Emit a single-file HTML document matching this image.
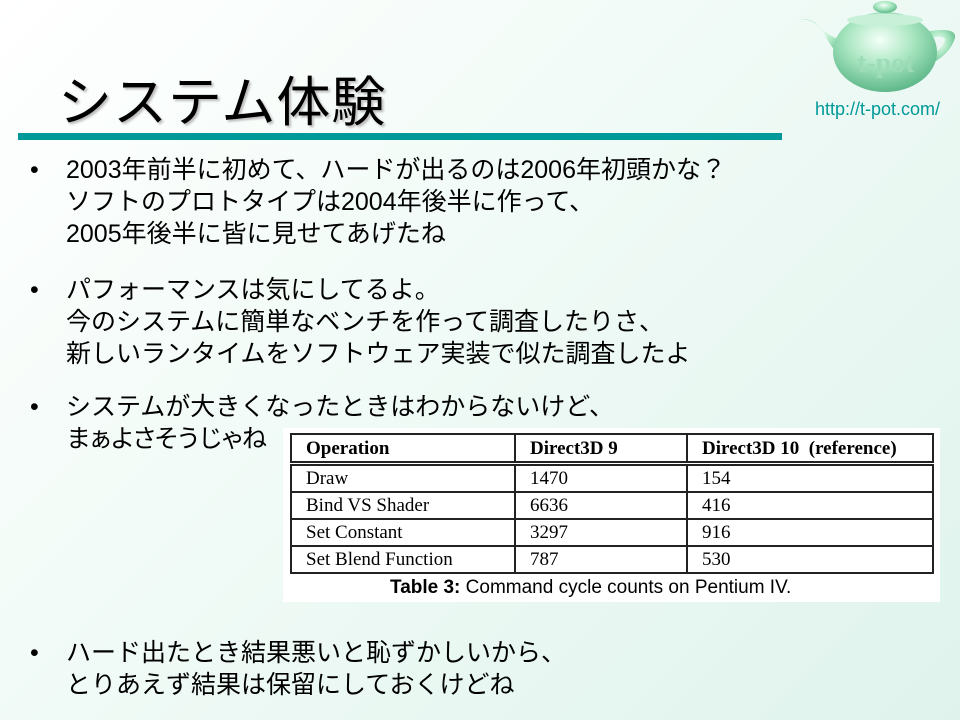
<!DOCTYPE html>
<html><head><meta charset="utf-8"><style>
body{margin:0;width:960px;height:720px;overflow:hidden;background:linear-gradient(135deg,#ffffff 0%,#f2fbf7 40%,#dff3ec 100%);font-family:"Liberation Sans","Noto Sans CJK JP",sans-serif;position:relative}
.t{position:absolute;left:58px;top:58px;font-size:54px;color:#000;text-shadow:2px 2px 2px #bbb;letter-spacing:1px}
.bar{position:absolute;left:18px;top:133px;width:764px;height:7px;background:#00999a}
.url{position:absolute;left:815px;top:99px;font-size:18px;color:#009999}
.b{position:absolute;left:30px;font-size:25px;line-height:32px;color:#000;letter-spacing:0}
.b span{position:absolute;left:0}
.b div{margin-left:36px;white-space:nowrap}
.box{position:absolute;left:283px;top:428px;width:657px;height:174px;background:#fff}
table{position:absolute;left:290px;top:433px;border-collapse:collapse;font-family:"Liberation Serif",serif;font-size:19px}
td{border:2px solid #222;padding:0 0 0 14px;height:25px;line-height:25px}
tr.h td{font-weight:bold;height:26px;border-bottom:5px double #222}
.cap{position:absolute;left:390px;top:577px;font-size:19px}
</style></head><body>
<svg style="position:absolute;left:785px;top:0" width="175" height="100" viewBox="0 0 175 100">
<defs><radialGradient id="g" cx="45%" cy="35%" r="65%"><stop offset="0" stop-color="#f4fff8"/><stop offset=".5" stop-color="#a8e6c0"/><stop offset="1" stop-color="#5fb88a"/></radialGradient></defs>
<path d="M10 20 Q30 16 40 35 Q48 52 60 58 L62 42 Q44 38 32 24 Q24 17 10 20Z" fill="url(#g)"/>
<path d="M140 32 Q172 26 170 38 Q165 55 142 66 L140 58 Q160 48 160 39 Q154 33 140 42Z" fill="url(#g)"/>
<ellipse cx="100" cy="52" rx="52" ry="40" fill="url(#g)"/>
<ellipse cx="100" cy="20" rx="38" ry="6" fill="#c8f0d8"/>
<ellipse cx="100" cy="7" rx="12" ry="6" fill="url(#g)"/>
<text x="72" y="72" font-family="Liberation Serif" font-weight="bold" font-size="28" fill="#9edbb8">t-pot</text>
</svg>
<div class="url">http://t-pot.com/</div>
<div class="t">システム体験</div>
<div class="bar"></div>
<div class="b" style="top:154px"><span>•</span><div>2003年前半に初めて、ハードが出るのは2006年初頭かな？<br>ソフトのプロトタイプは2004年後半に作って、<br>2005年後半に皆に見せてあげたね</div></div>
<div class="b" style="top:274px"><span>•</span><div>パフォーマンスは気にしてるよ。<br>今のシステムに簡単なベンチを作って調査したりさ、<br>新しいランタイムをソフトウェア実装で似た調査したよ</div></div>
<div class="b" style="top:391px"><span>•</span><div>システムが大きくなったときはわからないけど、<br><span style="position:static;letter-spacing:-3px">まぁよさそうじゃね</span></div></div>
<div class="b" style="top:637px"><span>•</span><div>ハード出たとき結果悪いと恥ずかしいから、<br>とりあえず結果は保留にしておくけどね</div></div>
<div class="box"></div>
<table>
<tr class="h"><td style="width:208px">Operation</td><td style="width:156px">Direct3D 9</td><td style="width:230px">Direct3D 10 &nbsp;(reference)</td></tr>
<tr><td>Draw</td><td>1470</td><td>154</td></tr>
<tr><td>Bind VS Shader</td><td>6636</td><td>416</td></tr>
<tr><td>Set Constant</td><td>3297</td><td>916</td></tr>
<tr><td>Set Blend Function</td><td>787</td><td>530</td></tr>
</table>
<div class="cap"><b>Table 3:</b> Command cycle counts on Pentium IV.</div>
</body></html>
